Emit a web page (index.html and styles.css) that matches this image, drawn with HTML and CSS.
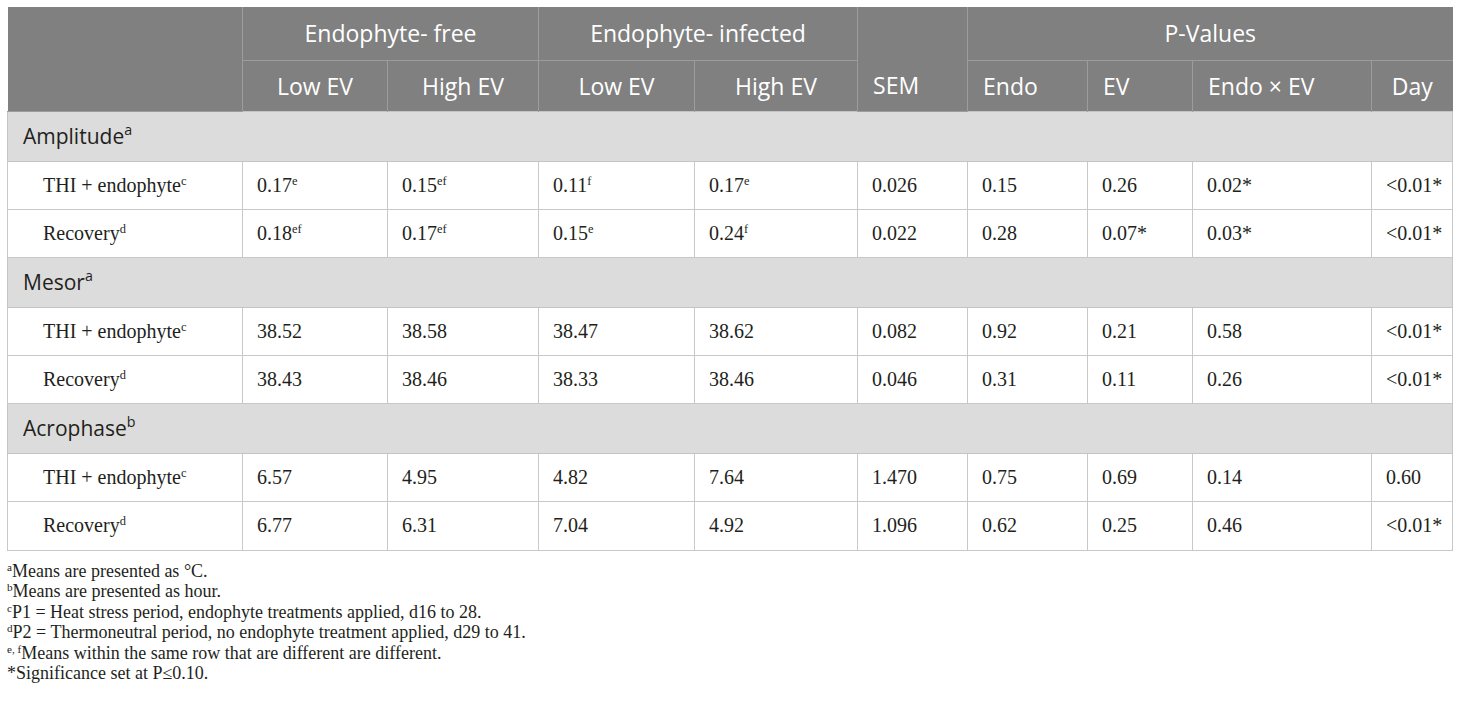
FILE: index.html
```html
<!DOCTYPE html>
<html lang="en">
<head>
  <meta charset="UTF-8">
  <meta name="viewport" content="width=device-width, initial-scale=1.0">
  <title>Cosinor analysis of body temperature</title>
  <link rel="stylesheet" href="styles.css">
</head>
<body>
  <table class="results">
    <colgroup>
      <col class="col-label">
      <col class="col-free-low">
      <col class="col-free-high">
      <col class="col-inf-low">
      <col class="col-inf-high">
      <col class="col-sem">
      <col class="col-endo">
      <col class="col-ev">
      <col class="col-endo-ev">
      <col class="col-day">
    </colgroup>
    <thead>
      <tr class="head-top">
        <th rowspan="2"></th>
        <th colspan="2" class="center">Endophyte- free</th>
        <th colspan="2" class="center">Endophyte- infected</th>
        <th rowspan="2" class="bottom">SEM</th>
        <th colspan="4" class="center">P-Values</th>
      </tr>
      <tr class="head-sub">
        <th class="center">Low EV</th>
        <th class="center">High EV</th>
        <th class="center">Low EV</th>
        <th class="center">High EV</th>
        <th>Endo</th>
        <th>EV</th>
        <th>Endo × EV</th>
        <th class="center">Day</th>
      </tr>
    </thead>
    <tbody>
      <tr class="section">
        <td colspan="10">Amplitude<sup>a</sup></td>
      </tr>
      <tr>
        <td>THI + endophyte<sup>c</sup></td>
        <td>0.17<sup>e</sup></td>
        <td>0.15<sup>ef</sup></td>
        <td>0.11<sup>f</sup></td>
        <td>0.17<sup>e</sup></td>
        <td>0.026</td>
        <td>0.15</td>
        <td>0.26</td>
        <td>0.02*</td>
        <td>&lt;0.01*</td>
      </tr>
      <tr>
        <td>Recovery<sup>d</sup></td>
        <td>0.18<sup>ef</sup></td>
        <td>0.17<sup>ef</sup></td>
        <td>0.15<sup>e</sup></td>
        <td>0.24<sup>f</sup></td>
        <td>0.022</td>
        <td>0.28</td>
        <td>0.07*</td>
        <td>0.03*</td>
        <td>&lt;0.01*</td>
      </tr>
      <tr class="section">
        <td colspan="10">Mesor<sup>a</sup></td>
      </tr>
      <tr>
        <td>THI + endophyte<sup>c</sup></td>
        <td>38.52</td>
        <td>38.58</td>
        <td>38.47</td>
        <td>38.62</td>
        <td>0.082</td>
        <td>0.92</td>
        <td>0.21</td>
        <td>0.58</td>
        <td>&lt;0.01*</td>
      </tr>
      <tr>
        <td>Recovery<sup>d</sup></td>
        <td>38.43</td>
        <td>38.46</td>
        <td>38.33</td>
        <td>38.46</td>
        <td>0.046</td>
        <td>0.31</td>
        <td>0.11</td>
        <td>0.26</td>
        <td>&lt;0.01*</td>
      </tr>
      <tr class="section">
        <td colspan="10">Acrophase<sup>b</sup></td>
      </tr>
      <tr>
        <td>THI + endophyte<sup>c</sup></td>
        <td>6.57</td>
        <td>4.95</td>
        <td>4.82</td>
        <td>7.64</td>
        <td>1.470</td>
        <td>0.75</td>
        <td>0.69</td>
        <td>0.14</td>
        <td>0.60</td>
      </tr>
      <tr class="last">
        <td>Recovery<sup>d</sup></td>
        <td>6.77</td>
        <td>6.31</td>
        <td>7.04</td>
        <td>4.92</td>
        <td>1.096</td>
        <td>0.62</td>
        <td>0.25</td>
        <td>0.46</td>
        <td>&lt;0.01*</td>
      </tr>
    </tbody>
  </table>

  <div class="notes">
    <p><sup>a</sup>Means are presented as °C.</p>
    <p><sup>b</sup>Means are presented as hour.</p>
    <p><sup>c</sup>P1 = Heat stress period, endophyte treatments applied, d16 to 28.</p>
    <p><sup>d</sup>P2 = Thermoneutral period, no endophyte treatment applied, d29 to 41.</p>
    <p><sup>e, f</sup>Means within the same row that are different are different.</p>
    <p>*Significance set at P≤0.10.</p>
  </div>
</body>
</html>
```

FILE: styles.css
```css
body {
  margin: 7px;
  font-family: "Liberation Serif", "Times New Roman", serif;
  color: #231f20;
  background: #fff;
}

.results {
  border-collapse: collapse;
  table-layout: fixed;
  width: 1445px;
}

.col-label { width: 235px; }
.col-free-low { width: 145px; }
.col-free-high { width: 151px; }
.col-inf-low { width: 156px; }
.col-inf-high { width: 163px; }
.col-sem { width: 110px; }
.col-endo { width: 120px; }
.col-ev { width: 105px; }
.col-endo-ev { width: 179px; }
.col-day { width: 81px; }

/* header */
thead th {
  background: #808080;
  color: #fff;
  font-family: "Open Sans", sans-serif;
  font-size: 23px;
  font-weight: 400;
  text-align: left;
  padding: 0 0 0 15px;
  border: 1px solid #9c9c9c;
  border-top: none;
  white-space: nowrap;
}

thead th:first-child {
  border-left: none;
}

thead th:last-child {
  border-right: none;
}

thead th.center {
  text-align: center;
  padding: 0;
}

thead th.bottom {
  vertical-align: bottom;
  padding-bottom: 10px;
}

.head-top {
  height: 53px;
}

.head-top th {
  padding-bottom: 2px;
}

.head-sub {
  height: 51px;
}

.head-sub th {
  border-bottom: none;
}

/* body */
tbody td {
  height: 47px;
  padding: 0 0 0 14px;
  font-size: 20px;
  border: 1px solid #c8c8c8;
  white-space: nowrap;
}

tbody td:first-child {
  padding-left: 35px;
}

tbody tr.last td {
  height: 48px;
}

tbody tr.section td {
  height: 49px;
  background: #dcdcdc;
  font-family: "Open Sans", sans-serif;
  font-size: 21px;
  padding-left: 15px;
  border-color: #c4c4c4;
}

sup {
  font-size: 0.62em;
  line-height: 0;
  vertical-align: 0.6em;
}

tbody tr.section sup {
  font-size: 0.68em;
}

/* footnotes */
.notes {
  margin-top: 10px;
  font-size: 18px;
  line-height: 20.6px;
}

.notes p {
  margin: 0;
}

.notes sup {
  font-size: 0.62em;
  vertical-align: 0.5em;
}
```
